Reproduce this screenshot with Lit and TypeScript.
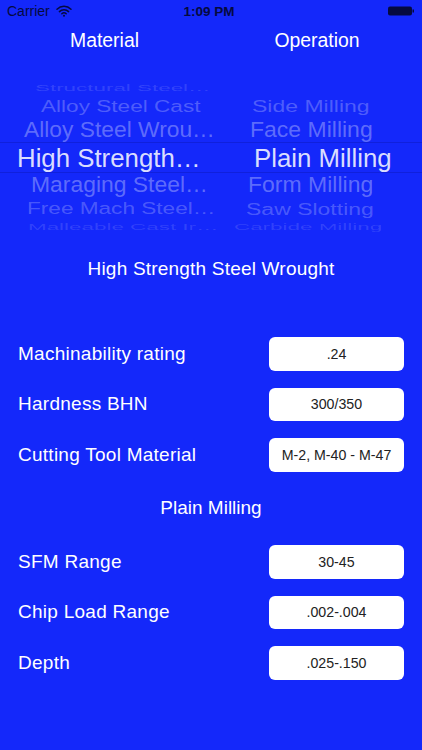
import { LitElement, html, css } from "lit";
import { customElement } from "lit/decorators.js";

type Wheel = { text: string; x: number; size: number; sy: number; op: number; h: number };

const left: Wheel[] = [
  { text: "Structural Steel…", x: 35, size: 22.4, sy: 0.38, op: 0.14, h: 16 },
  { text: "Alloy Steel Cast", x: 41, size: 22.6, sy: 0.74, op: 0.25, h: 21 },
  { text: "Alloy Steel Wrou…", x: 24, size: 22.8, sy: 0.93, op: 0.32, h: 27 },
  { text: "High Strength…", x: 17, size: 25.8, sy: 1, op: 0.85, h: 29 },
  { text: "Maraging Steel…", x: 31, size: 22.9, sy: 0.93, op: 0.32, h: 25 },
  { text: "Free Mach Steel…", x: 27, size: 22.6, sy: 0.74, op: 0.24, h: 22 },
  { text: "Malleable Cast Ir…", x: 28, size: 22.4, sy: 0.38, op: 0.13, h: 14 },
];
const right: Wheel[] = [
  { text: "", x: 0, size: 16, sy: 0.38, op: 0, h: 16 },
  { text: "Side Milling", x: 252, size: 23, sy: 0.74, op: 0.25, h: 21 },
  { text: "Face Milling", x: 250, size: 23, sy: 0.93, op: 0.32, h: 27 },
  { text: "Plain Milling", x: 254, size: 25.8, sy: 1, op: 0.85, h: 29 },
  { text: "Form Milling", x: 248, size: 23, sy: 0.93, op: 0.32, h: 25 },
  { text: "Saw Slotting", x: 246, size: 23, sy: 0.74, op: 0.24, h: 22 },
  { text: "Carbide Milling", x: 234, size: 22.4, sy: 0.38, op: 0.13, h: 14 },
];

@customElement("app-root")
export class AppRoot extends LitElement {
  static styles = css`
    :host {
      display: block;
      width: 422px;
      height: 750px;
      overflow: hidden;
      background: #1428fa;
      color: #fff;
      font-family: "Liberation Sans", Arial, sans-serif;
    }
    .status {
      height: 22px;
      display: grid;
      grid-template-columns: 1fr auto 1fr;
      align-items: center;
      padding: 0 7px 0 7px;
      color: #050a40;
      font-size: 14px;
    }
    .status-left { display: flex; align-items: center; gap: 6px; }
    .time { font-weight: 700; font-size: 13.5px; margin-right: 4px; }
    .status-right { display: flex; justify-content: flex-end; }
    .heads {
      height: 36px;
      display: grid;
      grid-template-columns: 209px 216px;
      align-items: center;
      text-align: center;
      font-size: 19.4px;
    }
    .picker {
      position: relative;
      height: 154px;
      margin-top: 22px;
      overflow: hidden;
    }
    .wheel { position: absolute; inset: 0; display: flex; flex-direction: column; }
    .line { position: absolute; left: 0; right: 0; height: 1px; background: #1020dc; }
    .line.a { top: 62px; }
    .line.b { top: 92px; }
    .item {
      flex: none;
      white-space: nowrap;
      display: flex;
      align-items: center;
    }
    .item span { display: inline-block; transform-origin: left center; }
    .title { margin-top: 21px; text-align: center; font-size: 19px; height: 28px; line-height: 28px; letter-spacing: 0.2px; }
    .rows { display: flex; flex-direction: column; }
    .first { margin-top: 54px; }
    .row {
      height: 33.5px;
      display: flex;
      align-items: center;
      justify-content: space-between;
      padding: 0 18px;
      font-size: 19px;
      letter-spacing: 0.26px;
    }
    .row + .row { margin-top: 17px; }
    .field {
      width: 135px;
      height: 33.5px;
      border-radius: 6px;
      background: #fff;
      color: #222;
      font-size: 14.2px;
      display: flex;
      align-items: center;
      justify-content: center;
      letter-spacing: 0;
    }
    .sub { height: 24px; line-height: 24px; margin: 24.5px 0 25px; text-align: center; font-size: 19px; }
  `;

  private wheel(items: Wheel[]) {
    return html`<div class="wheel">
      ${items.map(
        (w) => html`<div class="item" style="height:${w.h}px;padding-left:${w.x}px;font-size:${w.size}px;color:rgba(255,255,255,${w.op})">
          <span style="transform:scaleY(${w.sy})">${w.text}</span>
        </div>`
      )}
    </div>`;
  }

  private row(label: string, value: string) {
    return html`<div class="row"><span>${label}</span><div class="field">${value}</div></div>`;
  }

  render() {
    return html`
      <div class="status">
        <div class="status-left">
          <span>Carrier</span>
          <svg width="16" height="12" viewBox="0 0 16 12" fill="none" stroke="#050a40" stroke-linecap="round">
            <path d="M1 4.2a10 10 0 0 1 14 0" stroke-width="1.5" />
            <path d="M3.4 6.6a6.6 6.6 0 0 1 9.2 0" stroke-width="1.5" />
            <path d="M5.8 8.8a3.2 3.2 0 0 1 4.4 0" stroke-width="1.5" />
            <path d="M8 10.8v.01" stroke-width="2" />
          </svg>
        </div>
        <span class="time">1:09 PM</span>
        <div class="status-right">
          <svg width="28" height="12" viewBox="0 0 28 12">
            <rect x="1" y="1.5" width="24" height="9" rx="2" fill="#050a40" />
            <rect x="25.5" y="4.5" width="1.5" height="3" fill="#050a40" />
          </svg>
        </div>
      </div>
      <div class="heads"><span>Material</span><span>Operation</span></div>
      <div class="picker">
        <div class="line a"></div>
        <div class="line b"></div>
        ${this.wheel(left)} ${this.wheel(right)}
      </div>
      <div class="title">High Strength Steel Wrought</div>
      <div class="rows first">
        ${this.row("Machinability rating", ".24")}
        ${this.row("Hardness BHN", "300/350")}
        ${this.row("Cutting Tool Material", "M-2, M-40 - M-47")}
      </div>
      <div class="sub">Plain Milling</div>
      <div class="rows">
        ${this.row("SFM Range", "30-45")}
        ${this.row("Chip Load Range", ".002-.004")}
        ${this.row("Depth", ".025-.150")}
      </div>
    `;
  }
}
